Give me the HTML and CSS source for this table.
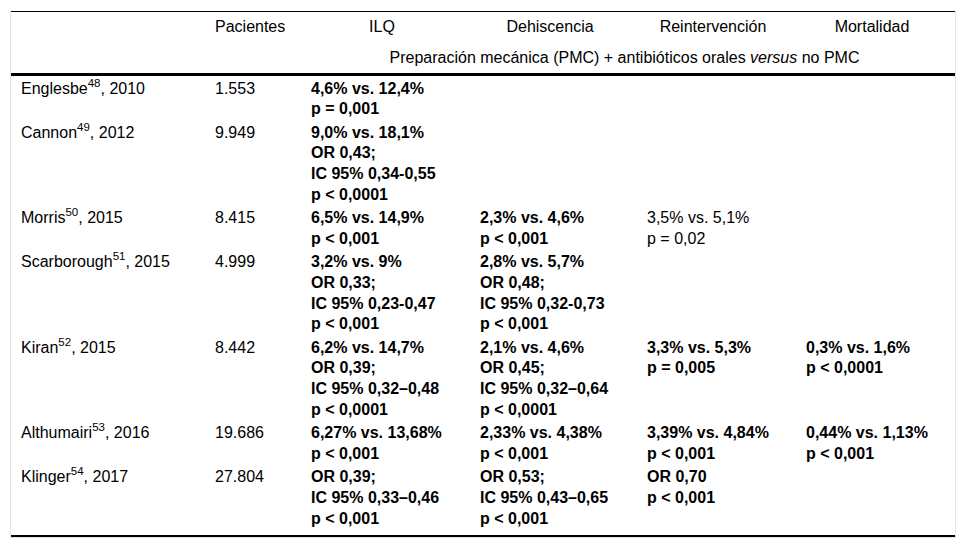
FILE: index.html
```html
<!DOCTYPE html>
<html lang="es">
<head>
<meta charset="utf-8">
<title>Tabla</title>
<link rel="stylesheet" href="styles.css">
</head>
<body>
<div class="frame">
<table class="data">
<colgroup>
<col class="c1"><col class="c2"><col class="c3"><col class="c4"><col class="c5"><col class="c6">
</colgroup>
<thead>
<tr class="h1">
<th></th><th>Pacientes</th><th>ILQ</th><th>Dehiscencia</th><th>Reintervención</th><th>Mortalidad</th>
</tr>
<tr class="h2">
<th></th><th></th><th colspan="4">Preparación mecánica (PMC) + antibióticos orales <em>versus</em> no PMC</th>
</tr>
</thead>
<tbody>
<tr class="first">
<td>Englesbe<sup>48</sup>, 2010</td><td>1.553</td>
<td class="b">4,6% vs. 12,4%<br>p = 0,001</td><td></td><td></td><td></td>
</tr>
<tr>
<td>Cannon<sup>49</sup>, 2012</td><td>9.949</td>
<td class="b">9,0% vs. 18,1%<br>OR 0,43;<br>IC 95% 0,34-0,55<br>p &lt; 0,0001</td><td></td><td></td><td></td>
</tr>
<tr>
<td>Morris<sup>50</sup>, 2015</td><td>8.415</td>
<td class="b">6,5% vs. 14,9%<br>p &lt; 0,001</td>
<td class="b">2,3% vs. 4,6%<br>p &lt; 0,001</td>
<td>3,5% vs. 5,1%<br>p = 0,02</td><td></td>
</tr>
<tr>
<td>Scarborough<sup>51</sup>, 2015</td><td>4.999</td>
<td class="b">3,2% vs. 9%<br>OR 0,33;<br>IC 95% 0,23-0,47<br>p &lt; 0,001</td>
<td class="b">2,8% vs. 5,7%<br>OR 0,48;<br>IC 95% 0,32-0,73<br>p &lt; 0,001</td>
<td></td><td></td>
</tr>
<tr>
<td>Kiran<sup>52</sup>, 2015</td><td>8.442</td>
<td class="b">6,2% vs. 14,7%<br>OR 0,39;<br>IC 95% 0,32–0,48<br>p &lt; 0,0001</td>
<td class="b">2,1% vs. 4,6%<br>OR 0,45;<br>IC 95% 0,32–0,64<br>p &lt; 0,0001</td>
<td class="b">3,3% vs. 5,3%<br>p = 0,005</td>
<td class="b">0,3% vs. 1,6%<br>p &lt; 0,0001</td>
</tr>
<tr>
<td>Althumairi<sup>53</sup>, 2016</td><td>19.686</td>
<td class="b">6,27% vs. 13,68%<br>p &lt; 0,001</td>
<td class="b">2,33% vs. 4,38%<br>p &lt; 0,001</td>
<td class="b">3,39% vs. 4,84%<br>p &lt; 0,001</td>
<td class="b">0,44% vs. 1,13%<br>p &lt; 0,001</td>
</tr>
<tr class="last">
<td>Klinger<sup>54</sup>, 2017</td><td>27.804</td>
<td class="b">OR 0,39;<br>IC 95% 0,33–0,46<br>p &lt; 0,001</td>
<td class="b">OR 0,53;<br>IC 95% 0,43–0,65<br>p &lt; 0,001</td>
<td class="b">OR 0,70<br>p &lt; 0,001</td>
<td></td>
</tr>
</tbody>
</table>
</div>
</body>
</html>
```
FILE: styles.css
```css
html, body {
  margin: 0;
  padding: 0;
  background: #ffffff;
}

body {
  font-family: "Liberation Sans", Arial, Helvetica, sans-serif;
  font-size: 16px;
  color: #000000;
}

.frame {
  margin: 11px 0 0 10px;
  width: 944px;
  border-left: 1px solid #e4e4e4;
  border-right: 1px solid #e4e4e4;
  border-bottom: 1px solid #e4e4e4;
}

.data {
  width: 944px;
  table-layout: fixed;
  border-collapse: collapse;
  border-top: 1px solid #000;
  border-bottom: 2px solid #000;
  line-height: 20.6px;
}

.c1 { width: 194px; }
.c2 { width: 96px; }
.c3 { width: 169px; }
.c4 { width: 167px; }
.c5 { width: 159px; }
.c6 { width: 159px; }

.data th {
  font-weight: normal;
  text-align: center;
  padding: 5px 17px 5px 10px;
  white-space: nowrap;
}

.data .h2 th {
  border-bottom: 3px solid #000;
}

.data td {
  text-align: left;
  vertical-align: top;
  padding: 1.5px 4px 1.5px 10px;
  white-space: nowrap;
}

.data .first td {
  padding-top: 2.5px;
}

.data .last td {
  padding-bottom: 6px;
}

.data td.b {
  font-weight: bold;
}

.data sup {
  font-size: 11.5px;
  line-height: 0;
  vertical-align: 7px;
}

.data em {
  font-style: italic;
}
```
